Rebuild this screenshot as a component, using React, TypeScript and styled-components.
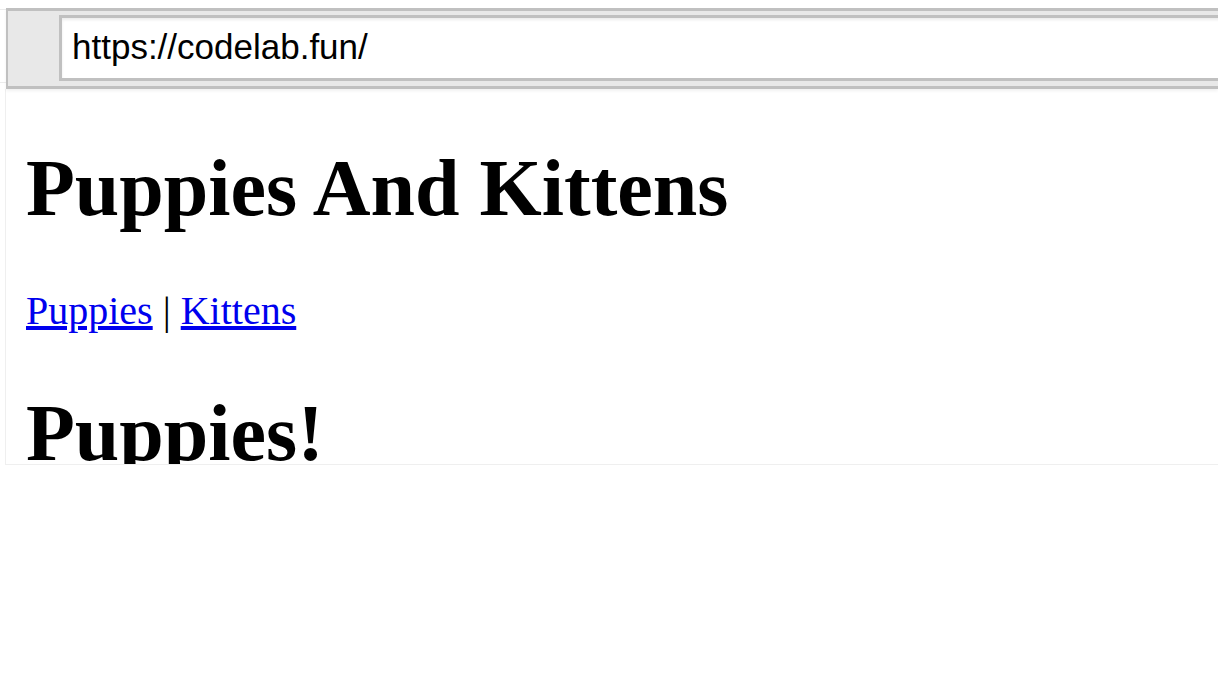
import React from "react";
import styled, { createGlobalStyle } from "styled-components";

const Global = createGlobalStyle`
  html, body { margin: 0; padding: 0; background: #ffffff; }
  body { overflow: hidden; }
`;

const Screen = styled.div`
  width: 1218px;
  height: 681px;
  padding-top: 8px;
  box-sizing: border-box;
  overflow: hidden;
  background: #ffffff;
`;

const TopRow = styled.div`
  display: flex;
  align-items: flex-start;
`;

const Stub = styled.div`
  flex: none;
  width: 6px;
  height: 72px;
  margin-top: 1px;
  border-top: 1px solid #ececec;
  border-bottom: 1px solid #ececec;
`;

const AddressBar = styled.div`
  flex: 1;
  min-width: 0;
  display: flex;
  height: 66px;
  padding: 4px 0 5px 51px;
  box-sizing: content-box;
  background: #e8e8e8;
  border-top: 3px solid #c0c0c0;
  border-bottom: 3px solid #c0c0c0;
  border-left: 2px solid #c0c0c0;
  box-shadow: 0 2px 3px rgba(0, 0, 0, 0.06);
`;

const UrlField = styled.div`
  flex: 1;
  height: 66px;
  margin-right: -40px;
  box-sizing: border-box;
  display: flex;
  align-items: center;
  padding: 0 10px 2px 10px;
  background: #ffffff;
  border: 3px solid #c0c0c0;
  box-shadow: inset 0 2px 3px rgba(0, 0, 0, 0.08);
  font-family: "Liberation Sans", Arial, sans-serif;
  font-size: 35px;
  color: #000000;
  white-space: nowrap;
`;

const Frame = styled.div`
  margin-left: 5px;
  height: 375px;
  overflow: hidden;
  border-left: 1px solid #efefef;
  border-bottom: 1px solid #efefef;
  background: #ffffff;
  font-family: "Liberation Serif", "Times New Roman", serif;
  font-size: 40px;
  line-height: 1.149;
  color: #000000;
`;

const FrameBody = styled.div`
  padding: 0 20px;
  display: flow-root;
`;

const Heading = styled.h1`
  font-size: 80px;
  font-weight: bold;
  margin: 53.6px 0;
  line-height: 1.149;
`;

const Nav = styled.p`
  margin: 40px 0;
  line-height: 1.149;
`;

const NavLink = styled.a`
  color: #0000ee;
  text-decoration: underline;
`;

const Sep = styled.span`
  color: #000000;
`;

export default function App() {
  return (
    <Screen>
      <Global />
      <TopRow>
        <Stub />
        <AddressBar>
          <UrlField>https://codelab.fun/</UrlField>
        </AddressBar>
      </TopRow>
      <Frame>
        <FrameBody>
          <Heading>Puppies And Kittens</Heading>
          <Nav>
            <NavLink href="#">Puppies</NavLink>
            <Sep> | </Sep>
            <NavLink href="#">Kittens</NavLink>
          </Nav>
          <Heading>Puppies!</Heading>
        </FrameBody>
      </Frame>
    </Screen>
  );
}
